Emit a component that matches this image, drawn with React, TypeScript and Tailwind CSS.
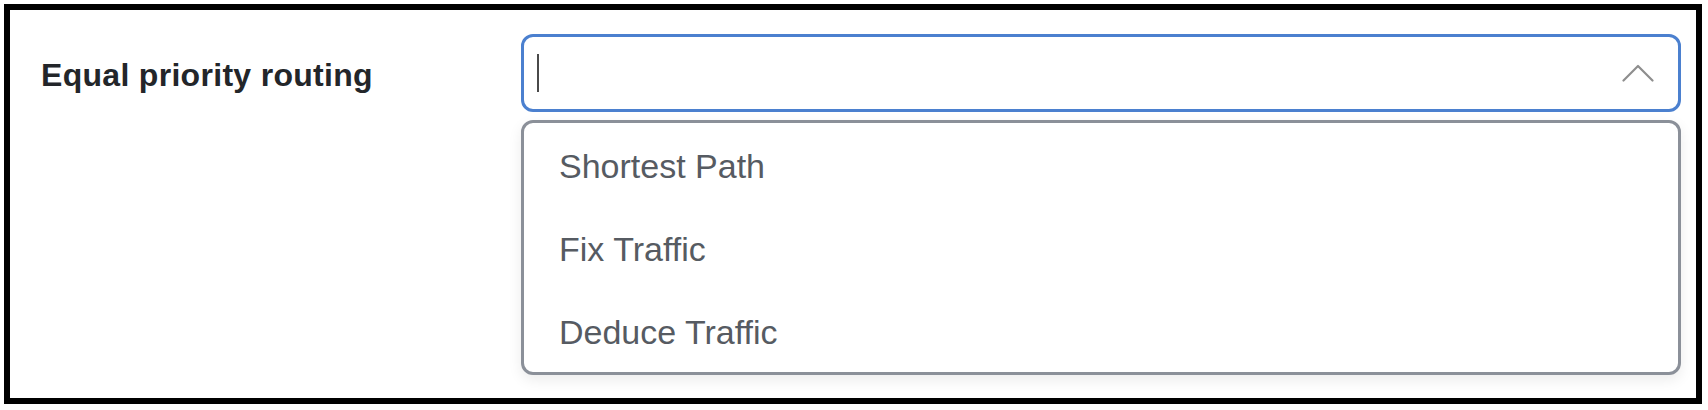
import React from "react";

const options = ["Shortest Path", "Fix Traffic", "Deduce Traffic"];

export default function App() {
  return (
    <div className="bg-white p-[4px]" style={{ fontFamily: '"Liberation Sans", Arial, sans-serif' }}>
      <div className="h-[400px] w-[1698px] border-[6px] border-black bg-white">
        <div className="flex pl-[31px] pr-[15px] pt-[24px]">
          {/* Label */}
          <div className="flex h-[78px] w-[480px] items-center pt-[3px]">
            <span className="text-[32px] font-bold tracking-[0.3px] text-[#23262a]">Equal priority routing</span>
          </div>

          {/* Select */}
          <div className="flex-1">
            <div className="flex h-[78px] items-center rounded-[12px] border-[3px] border-[#4b80cf] bg-white pl-[13px] pr-[24px]">
              <span className="h-[38px] w-[2px] bg-[#4a4a4a]" />
              <div className="flex-1" />
              <svg width="32" height="18" viewBox="0 0 32 18" fill="none">
                <path d="M1.5 16.5 L16 2 L30.5 16.5" stroke="#8e8e8e" strokeWidth="2.2" strokeLinecap="round" strokeLinejoin="round" />
              </svg>
            </div>

            <div className="mt-[8px] h-[255px] rounded-[12px] border-[3px] border-[#8b9099] bg-white shadow-[0_5px_14px_rgba(0,0,0,0.08)]">
              {options.map((opt) => (
                <div key={opt} className="flex h-[83px] items-center pl-[35px] pt-[3px]">
                  <span className="text-[34px] text-[#565b62]">{opt}</span>
                </div>
              ))}
            </div>
          </div>
        </div>
      </div>
    </div>
  );
}
